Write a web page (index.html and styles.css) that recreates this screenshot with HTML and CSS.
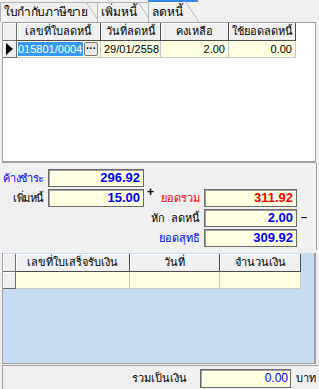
FILE: index.html
```html
<!DOCTYPE html>
<html lang="th">
<head>
    <meta charset="UTF-8">
    <title>ลดหนี้</title>
    <link rel="stylesheet" href="styles.css">
</head>
<body>
    <div class="tabs">
        <div class="tab tab-first">ใบกำกับภาษีขาย</div>
        <div class="tab tab-second">เพิ่มหนี้</div>
        <div class="tab tab-active">ลดหนี้</div>
    </div>

    <div class="grid-top">
        <div class="row head">
            <div class="ind"></div>
            <div class="cell c1">เลขที่ใบลดหนี้</div>
            <div class="cell c2">วันที่ลดหนี้</div>
            <div class="cell c3">คงเหลือ</div>
            <div class="cell c4">ใช้ยอดลดหนี้</div>
        </div>
        <div class="row data">
            <div class="ind"><span class="arrow"></span></div>
            <div class="cell c1 left"><span class="sel">015801/0004</span><span class="dots">···</span></div>
            <div class="cell c2 left">29/01/2558</div>
            <div class="cell c3 num">2.00</div>
            <div class="cell c4 num">0.00</div>
        </div>
    </div>

    <div class="summary">
        <div class="lbl blue r1">ค้างชำระ</div>
        <div class="box blue r1 k2">296.92</div>

        <div class="lbl r2">เพิ่มหนี้</div>
        <div class="box blue r2 k2">15.00</div>
        <div class="lbl-right r2 k3"><span class="sign">+</span><span class="red">ยอดรวม</span></div>
        <div class="box red r2 k4">311.92</div>

        <div class="lbl-right r3 k3"><span>หัก&nbsp;&nbsp;ลดหนี้</span></div>
        <div class="box blue r3 k4">2.00</div>
        <div class="minus r3 k5">–</div>

        <div class="lbl-right r4 k3"><span class="blue">ยอดสุทธิ</span></div>
        <div class="box blue r4 k4">309.92</div>
    </div>

    <div class="grid-bottom">
        <div class="row head">
            <div class="ind"></div>
            <div class="cell b1">เลขที่ใบเสร็จรับเงิน</div>
            <div class="cell b2">วันที่</div>
            <div class="cell b3">จำนวนเงิน</div>
        </div>
        <div class="row data">
            <div class="ind"></div>
            <div class="cell b1"></div>
            <div class="cell b2"></div>
            <div class="cell b3"></div>
        </div>
    </div>

    <div class="footer">
        <span class="total-lbl">รวมเป็นเงิน</span>
        <span class="total-box">0.00</span>
        <span class="unit">บาท</span>
    </div>
</body>
</html>
```

FILE: styles.css
```css
body {
    margin: 0;
    width: 319px;
    height: 389px;
    overflow: hidden;
    background: #f0f0f0;
    font-family: "Liberation Sans", sans-serif;
    font-size: 11px;
    color: #000;
    white-space: nowrap;
}

/* แท็บ */
.tabs {
    display: flex;
    height: 22px;
    align-items: flex-end;
}

.tab {
    position: relative;
    height: 20px;
    line-height: 19px;
    padding: 0 14px 0 3px;
    border-left: 1px solid #b4b4b4;
    border-top: 1px solid #b4b4b4;
    box-sizing: border-box;
    font-size: 12px;
}

.tab::after {
    content: "";
    position: absolute;
    top: -1px;
    right: -1px;
    width: 14px;
    height: 21px;
    background: linear-gradient(to top right, transparent calc(50% - 0.6px), #a8a8a8 50%, transparent calc(50% + 0.6px));
}

.tab-first {
    width: 99px;
    letter-spacing: -0.4px;
}

.tab-second {
    width: 54px;
    margin-left: -2px;
    background: #f0f0f0;
}

.tab-active {
    width: 50px;
    height: 22px;
    line-height: 21px;
    border-top: 2px solid #2e8ae6;
    margin-left: -3px;
    background: #f0f0f0;
}

/* ตารางบน */
.grid-top {
    margin: 0 3px 0 2px;
    height: 141px;
    background: #fff;
    border: 1px solid #9aa3ad;
    border-right-color: #a0a0a0;
    border-bottom: 2px solid #a0a0a0;
    box-sizing: border-box;
}

.row {
    display: flex;
}

.head {
    height: 18px;
}

.data {
    height: 17px;
}

.ind {
    width: 14px;
    flex-shrink: 0;
    background: #f0f0f0;
    border-right: 1px solid #6d6d6d;
    border-bottom: 1px solid #6d6d6d;
    box-shadow: inset 1px 1px #fff;
    box-sizing: border-box;
    display: flex;
    align-items: center;
    justify-content: center;
}

.arrow {
    width: 0;
    height: 0;
    border-top: 6px solid transparent;
    border-bottom: 6px solid transparent;
    border-left: 7px solid #000;
}

.cell {
    box-sizing: border-box;
    flex-shrink: 0;
    overflow: hidden;
    font-size: 11px;
}

.head .cell {
    background: #f0f0f0;
    border-right: 1px solid #4a4a4a;
    border-bottom: 1px solid #4a4a4a;
    box-shadow: inset 1px 1px #fff;
    text-align: center;
    line-height: 17px;
}

.data .cell {
    background: #ffffe1;
    border-right: 1px solid #c8c8c8;
    border-bottom: 1px solid #c8c8c8;
    line-height: 16px;
    padding: 0 3px;
}

.c1 { width: 84px; }
.c2 { width: 60px; }
.c3 { width: 68px; }
.c4 { width: 67px; }

.left {
    display: flex;
    align-items: center;
}

.num {
    text-align: right;
}

.sel {
    background: #3399ff;
    color: #fff;
    line-height: 14px;
    margin-left: -2px;
    padding-right: 1px;
}

.dots {
    margin-left: auto;
    width: 14px;
    height: 14px;
    border: 1px solid #777;
    border-radius: 2px;
    background: #e8e8e8;
    box-sizing: border-box;
    font-size: 10px;
    font-weight: bold;
    line-height: 11px;
    text-align: center;
    margin-right: -1px;
}

/* สรุปยอด */
.summary {
    display: grid;
    grid-template-columns: 48px 96px 60px 93px 20px;
    grid-template-rows: 18px 18px 18px 18px;
    row-gap: 2px;
    height: 87px;
    padding-top: 6px;
    box-sizing: border-box;
    border-right: 1px solid #a0a0a0;
    margin-right: 2px;
}

.r1 { grid-row: 1; }
.r2 { grid-row: 2; }
.r3 { grid-row: 3; }
.r4 { grid-row: 4; }
.k2 { grid-column: 2; }
.k3 { grid-column: 3; }
.k4 { grid-column: 4; }
.k5 { grid-column: 5; }

.lbl {
    grid-column: 1;
    display: flex;
    align-items: center;
    justify-content: flex-end;
    padding-right: 4px;
    letter-spacing: -0.4px;
}

.lbl-right {
    display: flex;
    align-items: center;
    justify-content: flex-end;
    padding-right: 4px;
    position: relative;
}

.sign {
    position: absolute;
    left: 3px;
    top: -4px;
    font-weight: bold;
    font-size: 12px;
    color: #000;
}

.minus {
    font-weight: bold;
    padding-left: 4px;
    line-height: 16px;
}

.box {
    background: #ffffe1;
    border: 1px solid #6a6a6a;
    box-shadow: inset 1px 1px #a0a0a0;
    box-sizing: border-box;
    text-align: right;
    font-weight: bold;
    font-size: 13px;
    line-height: 16px;
    padding-right: 3px;
}

.blue { color: #0000ff; }
.red { color: #ff0000; }

/* ตารางล่าง */
.grid-bottom {
    margin: 3px 3px 0 2px;
    height: 111px;
    background: #c5dcf3;
    border-left: 1px solid #a0a0a0;
    border-right: 2px solid #a0a0a0;
    border-bottom: 1px solid #a0a0a0;
    box-sizing: border-box;
    padding-top: 1px;
}

.grid-bottom .ind {
    width: 13px;
}

.b1 { width: 114px; }
.b2 { width: 90px; }
.b3 { width: 81px; }

.grid-bottom .data .cell {
    background: #ffffe0;
}

/* รวมเงิน */
.footer {
    margin: 1px 1px 0 2px;
    height: 25px;
    border-top: 1px solid #a0a0a0;
    border-left: 1px solid #a0a0a0;
    display: flex;
    align-items: center;
    box-sizing: border-box;
}

.total-lbl {
    margin-left: 120px;
    width: 64px;
    text-align: right;
}

.total-box {
    margin-left: 13px;
    width: 91px;
    height: 19px;
    background: #ffffe1;
    border: 1px solid #6a6a6a;
    box-shadow: inset 1px 1px #a0a0a0;
    box-sizing: border-box;
    color: #0000ff;
    font-size: 12px;
    text-align: right;
    line-height: 17px;
    padding-right: 2px;
}

.unit {
    margin-left: 5px;
}
```
